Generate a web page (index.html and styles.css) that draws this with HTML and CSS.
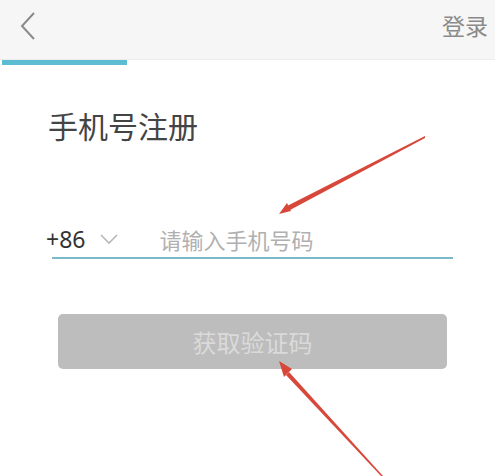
FILE: index.html
```html
<!DOCTYPE html>
<html lang="zh">
<head>
<meta charset="utf-8">
<link rel="stylesheet" href="styles.css">
</head>
<body>
<div class="page">
  <header class="topbar">
    <svg class="back" width="20" height="30" viewBox="0 0 20 30"><path d="M16 2 L4 15 L16 28" fill="none" stroke="#8a8a8a" stroke-width="2"/></svg>
    <span class="login">登录</span>
  </header>
  <div class="progress"><div class="progress-fill"></div></div>
  <main class="content">
    <h1 class="title">手机号注册</h1>
    <div class="phone-row">
      <span class="code">+86</span>
      <svg class="chev" width="20" height="12" viewBox="0 0 20 12"><path d="M2 2 L10 10 L18 2" fill="none" stroke="#b8b8b8" stroke-width="1.6"/></svg>
      <span class="placeholder">请输入手机号码</span>
    </div>
    <div class="btn">获取验证码</div>
  </main>
  <svg class="arrows" width="495" height="476" viewBox="0 0 495 476">
    <polygon points="425,136 425,138 290,210 287,206" fill="#d7483a"/>
    <polygon points="279,214 287,203 291,211" fill="#d7483a"/>
    <polygon points="381,476 383,476 289,372 286,375" fill="#d7483a"/>
    <polygon points="279,361 292,369 284,377" fill="#d7483a"/>
  </svg>
</div>
</body>
</html>
```

FILE: styles.css
```css
* { box-sizing: border-box; margin: 0; padding: 0; }
body { width: 495px; height: 476px; overflow: hidden; background: #fff; font-family: "Noto Sans CJK SC", "Noto Sans", sans-serif; }
.page { position: relative; width: 495px; height: 476px; }
.topbar { height: 60px; background: #f6f6f6; display: flex; align-items: center; justify-content: space-between; padding: 0 7px 8px 18px; border-bottom: 1px solid #ececec; }
.back { display: block; }
.login { font-size: 23px; color: #8a8a8a; line-height: 1; }
.progress { height: 6px; background: #fff; padding-left: 2px; }
.progress-fill { width: 125px; height: 5px; background: #5cbdd2; }
.content { padding: 44px 0 0 0; }
.title { font-size: 30px; font-weight: 400; color: #444; line-height: 1; padding-left: 48px; }
.phone-row { margin: 87px 42px 0 52px; height: 32px; display: flex; align-items: center; border-bottom: 2px solid #79b9c9; padding-bottom: 6px; }
.code { font-family: "Noto Sans", sans-serif; font-size: 23px; color: #333; margin-left: -6px; line-height: 1; }
.chev { margin-left: 14px; }
.placeholder { font-size: 22px; color: #b0b0b0; margin-left: 40px; line-height: 1; }
.btn { margin: 55px 48px 0 58px; height: 55px; background: #bdbdbd; border-radius: 5px; display: flex; align-items: center; justify-content: center; font-size: 24px; color: #dadada; }
.arrows { position: absolute; left: 0; top: 0; pointer-events: none; }
```
